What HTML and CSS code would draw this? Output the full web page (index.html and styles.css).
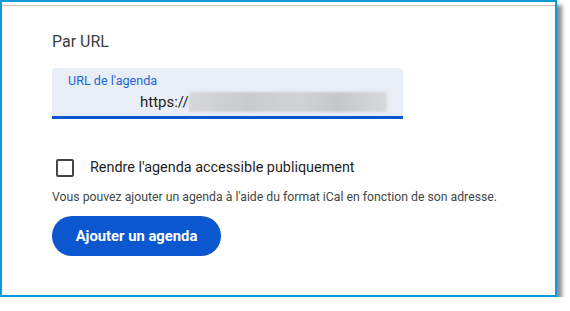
FILE: index.html
```html
<!DOCTYPE html>
<html lang="fr">
<head>
<meta charset="utf-8">
<link rel="stylesheet" href="styles.css">
</head>
<body>
<div class="frame">
  <div class="topline"></div>
  <div class="content">
    <div class="title">Par URL</div>
    <div class="field">
      <div class="label">URL de l'agenda</div>
      <div class="value"><span>https://</span><span class="blur"></span></div>
    </div>
    <div class="check-row">
      <span class="checkbox"></span>
      <span class="check-label">Rendre l'agenda accessible publiquement</span>
    </div>
    <div class="help">Vous pouvez ajouter un agenda à l'aide du format iCal en fonction de son adresse.</div>
    <button class="btn">Ajouter un agenda</button>
  </div>
</div>
</body>
</html>
```
FILE: styles.css
```css
html, body {
  margin: 0;
  padding: 0;
  background: #ffffff;
}
body {
  font-family: Roboto, "Noto Sans", sans-serif;
  color: #1f1f1f;
}
.frame {
  box-sizing: border-box;
  width: 557px;
  height: 297px;
  border: 2px solid #0c9bd8;
  background: #ffffff;
  box-shadow: 5px 5px 4px rgba(0, 0, 0, 0.45);
}
.topline {
  margin-top: 3px;
  border-top: 1px solid #c8c8c8;
}
.content {
  display: flex;
  flex-direction: column;
  align-items: flex-start;
  padding-left: 50px;
}
.title {
  margin-top: 24px;
  font-size: 16px;
  line-height: 24px;
  color: #3c4043;
}
.field {
  box-sizing: border-box;
  margin-top: 14px;
  width: 351px;
  height: 51px;
  background: #e9eef6;
  border-radius: 4px 4px 0 0;
  border-bottom: 3px solid #0b57d0;
  padding: 5px 0 0 16px;
}
.label {
  font-size: 12.6px;
  line-height: 16px;
  color: #1a66d8;
}
.value {
  display: flex;
  align-items: center;
  margin-top: 3px;
  padding-left: 72px;
  font-size: 15px;
  line-height: 20px;
  color: #1f1f1f;
}
.blur {
  display: block;
  width: 198px;
  height: 20px;
  background: linear-gradient(90deg, #d6d7da 0%, #c9cacd 30%, #d2d3d5 55%, #c6c7c9 75%, #d8d9db 100%);
  filter: blur(1px);
}
.check-row {
  display: flex;
  align-items: center;
  gap: 16px;
  margin-top: 39px;
  padding-left: 4px;
  height: 20px;
}
.checkbox {
  box-sizing: border-box;
  width: 18px;
  height: 18px;
  border: 2px solid #444746;
  border-radius: 2px;
}
.check-label {
  font-size: 14.4px;
  line-height: 20px;
  color: #1f1f1f;
}
.help {
  margin-top: 11px;
  font-size: 12.25px;
  line-height: 16px;
  color: #444746;
}
.btn {
  margin-top: 11px;
  width: 169px;
  height: 40px;
  border: none;
  border-radius: 20px;
  background: #0b57d0;
  color: #ffffff;
  font-family: Roboto, "Noto Sans", sans-serif;
  font-size: 14.8px;
  font-weight: 700;
  padding: 0;
}
```
